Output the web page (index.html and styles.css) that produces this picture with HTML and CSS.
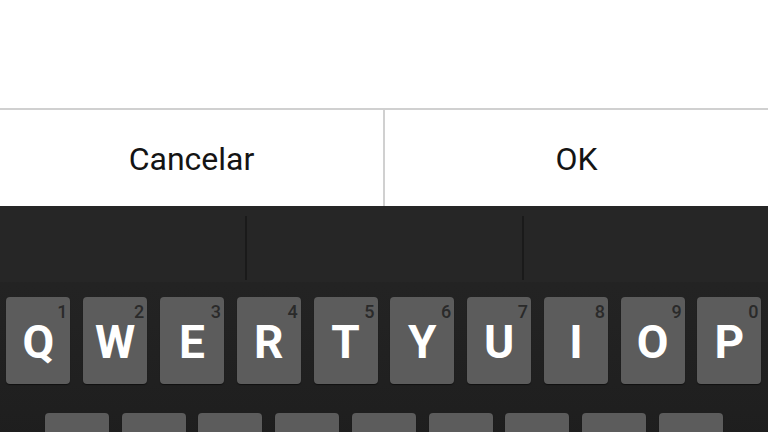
FILE: index.html
```html
<!DOCTYPE html>
<html>
<head>
<meta charset="utf-8">
<link rel="stylesheet" href="styles.css">
</head>
<body>
<div class="screen">
  <div class="dialog-top"></div>
  <div class="buttons">
    <div class="btn btn-left">Cancelar</div>
    <div class="btn">OK</div>
  </div>
  <div class="keyboard">
    <div class="suggestions">
      <div class="slot slot-a"></div>
      <div class="slot slot-b"></div>
      <div class="slot slot-c"></div>
    </div>
    <div class="row">
      <div class="key"><span class="num">1</span>Q</div>
      <div class="key"><span class="num">2</span>W</div>
      <div class="key"><span class="num">3</span>E</div>
      <div class="key"><span class="num">4</span>R</div>
      <div class="key"><span class="num">5</span>T</div>
      <div class="key"><span class="num">6</span>Y</div>
      <div class="key"><span class="num">7</span>U</div>
      <div class="key"><span class="num">8</span>I</div>
      <div class="key"><span class="num">9</span>O</div>
      <div class="key"><span class="num">0</span>P</div>
    </div>
    <div class="row row-2">
      <div class="key"></div>
      <div class="key"></div>
      <div class="key"></div>
      <div class="key"></div>
      <div class="key"></div>
      <div class="key"></div>
      <div class="key"></div>
      <div class="key"></div>
      <div class="key"></div>
    </div>
  </div>
</div>
</body>
</html>
```
FILE: styles.css
```css
html, body {
  margin: 0;
  padding: 0;
  width: 768px;
  height: 432px;
  overflow: hidden;
  background: #ffffff;
  font-family: Roboto, "Noto Sans", "Liberation Sans", sans-serif;
}
.screen {
  width: 768px;
  height: 432px;
  display: flex;
  flex-direction: column;
  overflow: hidden;
}
.dialog-top {
  height: 108px;
  flex: 0 0 108px;
  background: #ffffff;
}
.buttons {
  flex: 0 0 96px;
  display: flex;
  border-top: 2px solid #d0d0d0;
  background: #ffffff;
}
.btn {
  flex: 1;
  display: flex;
  align-items: center;
  justify-content: center;
  font-size: 32px;
  color: #141414;
  padding-top: 2px;
}
.btn-left {
  border-right: 2px solid #d0d0d0;
}
.keyboard {
  flex: 1;
  background: linear-gradient(to bottom, #252525 0%, #222222 40%, #1c1c1c 100%);
  display: flex;
  flex-direction: column;
}
.suggestions {
  flex: 0 0 76px;
  display: flex;
  box-sizing: border-box;
  padding: 10px 0 2px;
  background: #262626;
}
.slot-a {
  flex: 0 0 245px;
  border-right: 2px solid #1a1a1a;
}
.slot-b {
  flex: 0 0 275px;
  border-right: 2px solid #1a1a1a;
}
.slot-c {
  flex: 1;
}
.row {
  display: flex;
  margin-top: 15px;
}
.row-2 {
  margin-top: 29px;
  padding-left: 38.4px;
}
.key {
  position: relative;
  flex: 0 0 64px;
  height: 87px;
  margin: 0 6.4px;
  background: #5c5c5c;
  border-radius: 4px;
  box-shadow: 0 1px 1px rgba(0, 0, 0, 0.5);
  display: flex;
  align-items: center;
  justify-content: center;
  color: #ffffff;
  font-weight: bold;
  font-size: 46px;
  line-height: 1;
  padding-top: 2px;
  box-sizing: border-box;
}
.num {
  position: absolute;
  top: 6px;
  right: 3px;
  font-size: 18px;
  font-weight: 500;
  color: #2a2a2a;
}
```
